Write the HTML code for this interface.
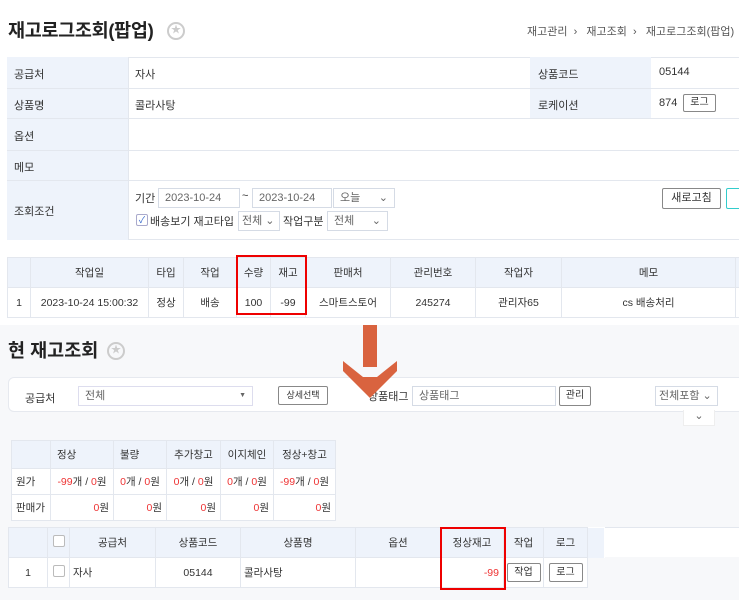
<!DOCTYPE html>
<html><head><meta charset="utf-8"><style>
*{box-sizing:border-box;margin:0;padding:0}
body{width:739px;height:600px;overflow:hidden;background:#fff;font-family:"Liberation Sans","Noto Sans CJK KR",sans-serif;font-size:11px;color:#333;position:relative}
.a{position:absolute}
.t{font-weight:bold;color:#222}
.star{width:18px;height:18px;border:2px solid #ccc;border-radius:50%;color:#ccc;font-size:10px;text-align:center;line-height:14px}
.lbl{background:#eef3fb}
.line{background:#e3e7ee}
.inp{border:1px solid #d5dbe5;background:#fff;color:#666;padding:0 6px;font-size:11px;line-height:18px;height:20px;white-space:nowrap}
.btn{border:1px solid #888;border-radius:2px;background:#fff;font-size:10px;text-align:center;color:#333}
table{border-collapse:collapse;position:absolute;font-size:10.5px}
td{border:1px solid #e3e7ee;text-align:center;white-space:nowrap;overflow:hidden}
.hd td{background:#eef3fb}
.red{color:#e33}
.box{border:2px solid #e00;position:absolute}
</style></head><body>
<div class="a t" style="left:8px;top:17px;font-size:18.5px;letter-spacing:-0.3px">재고로그조회(팝업)</div>
<div class="a star" style="left:167px;top:22px">★</div>
<div class="a" style="left:527px;top:23px;color:#555;font-size:11px;white-space:nowrap">재고관리 &nbsp;›&nbsp;&nbsp; 재고조회 &nbsp;›&nbsp;&nbsp; 재고로그조회(팝업)</div>

<div class="a" style="left:7px;top:57px;width:740px;height:183px;border:1px solid #e3e7ee;border-radius:4px;background:#fff"></div>
<div class="a lbl" style="left:7px;top:57px;width:121px;height:183px"></div>
<div class="a lbl" style="left:530px;top:57px;width:121px;height:61px"></div>
<div class="a line" style="left:7px;top:88px;width:732px;height:1px"></div>
<div class="a line" style="left:7px;top:118px;width:732px;height:1px"></div>
<div class="a line" style="left:7px;top:150px;width:732px;height:1px"></div>
<div class="a line" style="left:7px;top:180px;width:732px;height:1px"></div>
<div class="a line" style="left:128px;top:57px;width:1px;height:183px"></div>
<div class="a" style="left:14px;top:66px">공급처</div>
<div class="a" style="left:135px;top:66px">자사</div>
<div class="a" style="left:538px;top:66px">상품코드</div>
<div class="a" style="left:659px;top:66px">05144</div>
<div class="a" style="left:14px;top:97px">상품명</div>
<div class="a" style="left:135px;top:97px">콜라사탕</div>
<div class="a" style="left:538px;top:97px">로케이션</div>
<div class="a" style="left:659px;top:97px">874</div>
<div class="a btn" style="left:683px;top:94px;width:33px;height:18px;line-height:16px">로그</div>
<div class="a" style="left:14px;top:128px">옵션</div>
<div class="a" style="left:14px;top:159px">메모</div>
<div class="a" style="left:14px;top:203px">조회조건</div>
<div class="a" style="left:135px;top:190px">기간</div>
<div class="a inp" style="left:158px;top:188px;width:82px">2023-10-24</div>
<div class="a" style="left:242px;top:190px">~</div>
<div class="a inp" style="left:252px;top:188px;width:80px">2023-10-24</div>
<div class="a inp" style="left:333px;top:188px;width:62px">오늘 <span style="float:right">⌄</span></div>
<div class="a" style="left:136px;top:214px;width:12px;height:12px;border:1px solid #aac;border-radius:2px;color:#36c;font-size:9px;line-height:10px;text-align:center">✓</div>
<div class="a" style="left:150px;top:213px">배송보기 재고타입</div>
<div class="a inp" style="left:238px;top:211px;width:42px;padding:0 3px">전체 ⌄</div>
<div class="a" style="left:283px;top:213px">작업구분</div>
<div class="a inp" style="left:327px;top:211px;width:61px">전체 <span style="float:right">⌄</span></div>
<div class="a btn" style="left:662px;top:188px;width:59px;height:21px;line-height:19px;font-size:11px">새로고침</div>
<div class="a" style="left:726px;top:188px;width:20px;height:21px;border:1px solid #3cc;border-radius:2px"></div>

<table style="left:7px;top:257px;width:740px">
<tr class="hd" style="height:30px"><td style="width:23px"></td><td style="width:118px">작업일</td><td style="width:35px">타입</td><td style="width:53px">작업</td><td style="width:34px">수량</td><td style="width:35px">재고</td><td style="width:85px">판매처</td><td style="width:85px">관리번호</td><td style="width:86px">작업자</td><td style="width:174px">메모</td><td></td></tr>
<tr style="height:30px"><td>1</td><td>2023-10-24 15:00:32</td><td>정상</td><td>배송</td><td>100</td><td>-99</td><td>스마트스토어</td><td>245274</td><td>관리자65</td><td>cs 배송처리</td><td></td></tr>
</table>
<div class="box" style="left:236px;top:255px;width:71px;height:60px"></div>

<div class="a" style="left:0;top:325px;width:739px;height:275px;background:#f7f8fa"></div>
<div class="a t" style="left:8px;top:337px;font-size:18.5px">현 재고조회</div>
<div class="a star" style="left:107px;top:342px">★</div>
<div class="a" style="left:8px;top:377px;width:740px;height:35px;background:#fff;border:1px solid #e6e9ef;border-radius:6px"></div>
<div class="a" style="left:25px;top:390px">공급처</div>
<div class="a inp" style="left:78px;top:386px;width:175px;border-color:#dde">전체 <span style="float:right;font-size:7px">▼</span></div>
<div class="a btn" style="left:278px;top:386px;width:50px;height:19px;line-height:17px;font-size:9px">상세선택</div>
<div class="a" style="left:368px;top:388px">상품태그</div>
<div class="a inp" style="left:412px;top:386px;width:144px">상품태그</div>
<div class="a btn" style="left:559px;top:386px;width:32px;height:20px;line-height:18px">관리</div>
<div class="a inp" style="left:655px;top:386px;width:63px;padding:0 3px">전체포함 ⌄</div>
<div class="a" style="left:683px;top:410px;width:32px;height:16px;background:#fff;border:1px solid #eee;border-top:none;text-align:center;line-height:12px;color:#666">⌄</div>

<div class="a" style="left:343px;top:325px;width:54px;height:75px">
<svg width="54" height="75"><rect x="20" y="0" width="14" height="42" fill="#d9633f"/><polygon points="0,36 20,52 34,52 54,36 54,46 27,73 0,46" fill="#d9633f"/></svg>
</div>

<table style="left:11px;top:440px;width:325px;background:#fff">
<tr class="hd" style="height:28px"><td style="width:39px"></td><td style="width:63px;text-align:left;padding-left:6px">정상</td><td style="width:53px;text-align:left;padding-left:6px">불량</td><td style="width:54px">추가창고</td><td style="width:53px">이지체인</td><td>정상+창고</td></tr>
<tr style="height:26px"><td style="text-align:left;padding-left:4px">원가</td><td><span class="red">-99</span>개 / <span class="red">0</span>원</td><td><span class="red">0</span>개 / <span class="red">0</span>원</td><td><span class="red">0</span>개 / <span class="red">0</span>원</td><td><span class="red">0</span>개 / <span class="red">0</span>원</td><td><span class="red">-99</span>개 / <span class="red">0</span>원</td></tr>
<tr style="height:26px"><td style="text-align:left;padding-left:4px">판매가</td><td style="text-align:right;padding-right:4px"><span class="red">0</span>원</td><td style="text-align:right;padding-right:4px"><span class="red">0</span>원</td><td style="text-align:right;padding-right:4px"><span class="red">0</span>원</td><td style="text-align:right;padding-right:4px"><span class="red">0</span>원</td><td style="text-align:right;padding-right:4px"><span class="red">0</span>원</td></tr>
</table>

<div class="a" style="left:8px;top:527px;width:731px;height:30px;background:#fff;border-top:1px solid #e3e7ee"></div>
<table style="left:8px;top:527px;width:597px;background:#fff">
<tr class="hd" style="height:30px"><td style="width:39px"></td><td style="width:22px"><span style="display:inline-block;width:12px;height:12px;border:1px solid #bbb;border-radius:2px;background:#fff"></span></td><td style="width:86px">공급처</td><td style="width:85px">상품코드</td><td style="width:115px">상품명</td><td style="width:85px">옵션</td><td style="width:63px">정상재고</td><td style="width:40px">작업</td><td style="width:44px">로그</td><td style="border:none"></td></tr>
<tr style="height:30px"><td>1</td><td><span style="display:inline-block;width:12px;height:12px;border:1px solid #bbb;border-radius:2px"></span></td><td style="text-align:left;padding-left:3px">자사</td><td>05144</td><td style="text-align:left;padding-left:3px">콜라사탕</td><td></td><td style="text-align:right;padding-right:4px" class="red">-99</td><td><span class="btn" style="display:inline-block;width:34px;height:19px;line-height:17px">작업</span></td><td><span class="btn" style="display:inline-block;width:34px;height:19px;line-height:17px">로그</span></td><td style="border:none;background:#f7f8fa"></td></tr>
</table>
<div class="box" style="left:440px;top:527px;width:66px;height:63px"></div>
</body></html>
